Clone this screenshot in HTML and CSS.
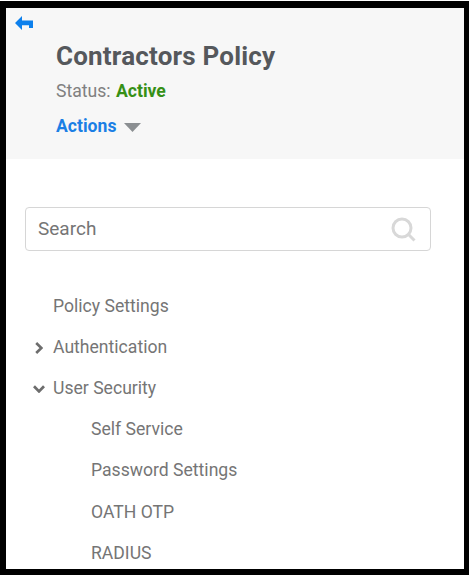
FILE: index.html
```html
<!DOCTYPE html>
<html lang="en">
<head>
<meta charset="utf-8">
<title>Contractors Policy</title>
<link rel="stylesheet" href="styles.css">
</head>
<body>
<main class="panel">
  <header class="header">
    <svg class="back" viewBox="0 0 18 14"><path d="M0 7 7 0V4.5H18V12H14V9.2H7V14Z"/></svg>
    <div class="heading">
      <h1 class="title"><span>Contractors Policy</span></h1>
      <p class="status">Status: <b>Active</b></p>
      <div class="actions"><span>Actions</span><svg class="caret" viewBox="0 0 17 9"><path d="M0 0H17L8.5 9Z"/></svg></div>
    </div>
  </header>
  <div class="search">
    <span>Search</span>
    <svg class="lens" viewBox="0 0 26 26"><circle cx="11" cy="11" r="9"/><path d="M17.3 17.3 23.5 23.5"/></svg>
  </div>
  <nav class="menu">
    <div class="item"><span class="toggle"></span><span>Policy Settings</span></div>
    <div class="item"><span class="toggle"><svg class="right" viewBox="0 0 8 12"><path d="M1.2 1 6.4 6 1.2 11"/></svg></span><span>Authentication</span></div>
    <div class="item"><span class="toggle"><svg class="down" viewBox="0 0 12 8"><path d="M1 1.2 6 6.4 11 1.2"/></svg></span><span>User Security</span></div>
    <div class="item child"><span>Self Service</span></div>
    <div class="item child"><span>Password Settings</span></div>
    <div class="item child"><span>OATH OTP</span></div>
    <div class="item child"><span>RADIUS</span></div>
  </nav>
</main>
</body>
</html>
```
FILE: styles.css
```css
* { box-sizing: border-box; }
body {
  margin: 0;
  padding: 1px 0;
  height: 576px;
  background: #fff;
  font-family: Roboto, sans-serif;
  color: #757575;
  overflow: hidden;
}
.panel {
  height: 574px;
  border: solid #000;
  border-width: 7px 5px 6px 6px;
  overflow: hidden;
}
.header {
  display: flex;
  height: 151px;
  padding-left: 9px;
  background: #f7f7f7;
}
.back { width: 18px; height: 14px; margin-top: 8px; fill: #0d80ec; }
.heading { padding: 32px 0 0 23px; }
.title { margin: 0; font-size: 26px; line-height: 32px; font-weight: 700; letter-spacing: 0.2px; color: #55585c; }
.status { margin: 7px 0 0; font-size: 17.6px; line-height: 24px; color: #808080; }
.status b { margin-left: 1px; font-weight: 700; color: #369016; }
.actions {
  display: flex;
  align-items: center;
  gap: 8px;
  margin-top: 11px;
  font-size: 17.6px;
  line-height: 24px;
  font-weight: 700;
  color: #1b7fe5;
}
.caret { width: 17px; height: 9px; margin-top: 3px; fill: #8b8f92; }
.search {
  display: flex;
  align-items: center;
  justify-content: space-between;
  width: 406px;
  height: 44px;
  margin: 48px 0 0 19px;
  padding: 0 13px 0 12px;
  border: 1.5px solid #d6d6d6;
  border-radius: 4px;
  font-size: 19px;
  line-height: 24px;
}
.search span { margin-bottom: 1px; }
.lens { width: 26px; height: 26px; margin-top: 2px; fill: none; stroke: #d8d8d8; stroke-width: 3; }
.menu { margin-top: 34px; font-size: 17.6px; }
.item { display: flex; align-items: center; height: 41.2px; padding-left: 27px; white-space: nowrap; }
.child { padding-left: 85px; }
.toggle { display: flex; justify-content: center; width: 12px; margin-right: 8px; }
.toggle svg { fill: none; stroke: #6d6d6d; stroke-width: 2.7; }
.right { width: 8px; height: 12px; margin-top: 2px; }
.down { width: 12px; height: 8px; margin-top: 2px; }
```
